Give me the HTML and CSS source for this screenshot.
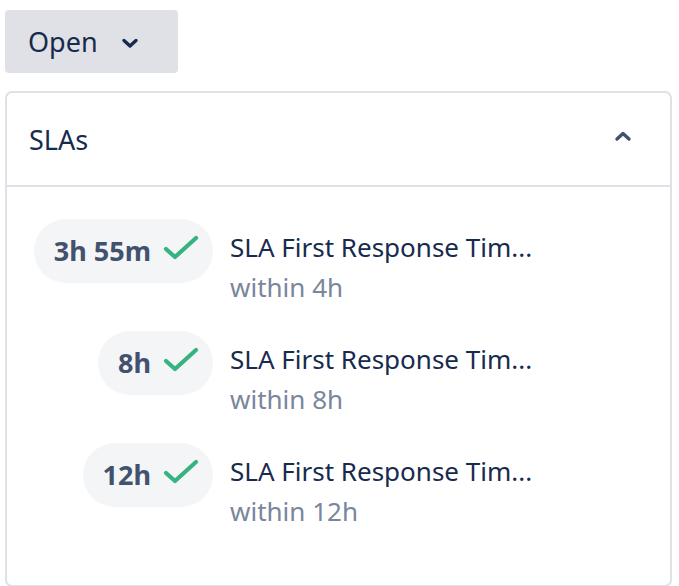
FILE: index.html
```html
<!DOCTYPE html>
<html>
<head>
<meta charset="utf-8">
<link rel="stylesheet" href="styles.css">
</head>
<body>
<div class="page">
  <button class="status-btn">
    <span class="status-label">Open</span>
    <svg class="chev" width="18" height="12" viewBox="0 0 18 12"><path d="M3 3.5 L9 9 L15 3.5" fill="none" stroke="#172b4d" stroke-width="3.4" stroke-linecap="round" stroke-linejoin="round"/></svg>
  </button>
  <section class="card">
    <header class="card-head">
      <span class="card-title">SLAs</span>
      <svg class="chev-up" width="18" height="12" viewBox="0 0 18 12"><path d="M3 9 L9 3.5 L15 9" fill="none" stroke="#42526e" stroke-width="3.4" stroke-linecap="round" stroke-linejoin="round"/></svg>
    </header>
    <div class="sla-list">
      <div class="sla-row">
        <div class="pill-col"><span class="pill"><span class="pill-text">3h 55m</span><svg class="check" width="36" height="26" viewBox="0 0 36 26"><path d="M3 14 L12 22 L33 3" fill="none" stroke="#36b37e" stroke-width="4.2" stroke-linecap="round" stroke-linejoin="round"/></svg></span></div>
        <div class="sla-text"><div class="sla-title">SLA First Response Tim...</div><div class="sla-sub">within 4h</div></div>
      </div>
      <div class="sla-row">
        <div class="pill-col"><span class="pill"><span class="pill-text">8h</span><svg class="check" width="36" height="26" viewBox="0 0 36 26"><path d="M3 14 L12 22 L33 3" fill="none" stroke="#36b37e" stroke-width="4.2" stroke-linecap="round" stroke-linejoin="round"/></svg></span></div>
        <div class="sla-text"><div class="sla-title">SLA First Response Tim...</div><div class="sla-sub">within 8h</div></div>
      </div>
      <div class="sla-row">
        <div class="pill-col"><span class="pill"><span class="pill-text">12h</span><svg class="check" width="36" height="26" viewBox="0 0 36 26"><path d="M3 14 L12 22 L33 3" fill="none" stroke="#36b37e" stroke-width="4.2" stroke-linecap="round" stroke-linejoin="round"/></svg></span></div>
        <div class="sla-text"><div class="sla-title">SLA First Response Tim...</div><div class="sla-sub">within 12h</div></div>
      </div>
    </div>
  </section>
</div>
</body>
</html>
```
FILE: styles.css
```css
html, body {
  margin: 0;
  padding: 0;
  background: #ffffff;
  font-family: "Noto Sans", "Open Sans", "Liberation Sans", sans-serif;
}
.page {
  padding: 10px 7px 0 5px;
  display: flex;
  flex-direction: column;
  align-items: flex-start;
  gap: 18px;
}
.status-btn {
  width: 173px;
  height: 63px;
  border: none;
  border-radius: 4px;
  background: #dfe1e6;
  display: flex;
  align-items: center;
  padding: 0 0 0 23px;
  font-family: inherit;
  cursor: pointer;
}
.status-label {
  font-size: 27px;
  color: #172b4d;
  line-height: 1;
}
.chev {
  margin-left: 23px;
  margin-top: 2px;
}
.card {
  align-self: stretch;
  border: 2px solid #dfe1e6;
  border-radius: 7px;
  height: 496px;
  box-sizing: border-box;
}
.card-head {
  height: 92px;
  border-bottom: 2px solid #dfe1e6;
  display: flex;
  align-items: center;
  justify-content: space-between;
  padding: 0 38px 0 22px;
  box-sizing: content-box;
}
.card-title {
  font-size: 27px;
  color: #172b4d;
}
.chev-up {
  margin-top: -6px;
}
.sla-list {
  padding: 32px 0 0 24px;
  display: flex;
  flex-direction: column;
  gap: 24px;
}
.sla-row {
  display: flex;
  align-items: flex-start;
  gap: 17px;
}
.pill-col {
  width: 182px;
  display: flex;
  justify-content: flex-end;
}
.pill {
  height: 64px;
  border-radius: 32px;
  background: #f4f5f7;
  display: flex;
  align-items: center;
  padding: 0 14px 0 20px;
  gap: 12px;
}
.pill-text {
  font-size: 27px;
  font-weight: 700;
  color: #42526e;
  margin-top: -1px;
}
.check {
  margin-top: -6px;
}
.sla-text {
  padding-top: 8px;
}
.sla-title {
  font-size: 26px;
  line-height: 40px;
  color: #172b4d;
}
.sla-sub {
  font-size: 26px;
  line-height: 40px;
  color: #7a869a;
}
```
